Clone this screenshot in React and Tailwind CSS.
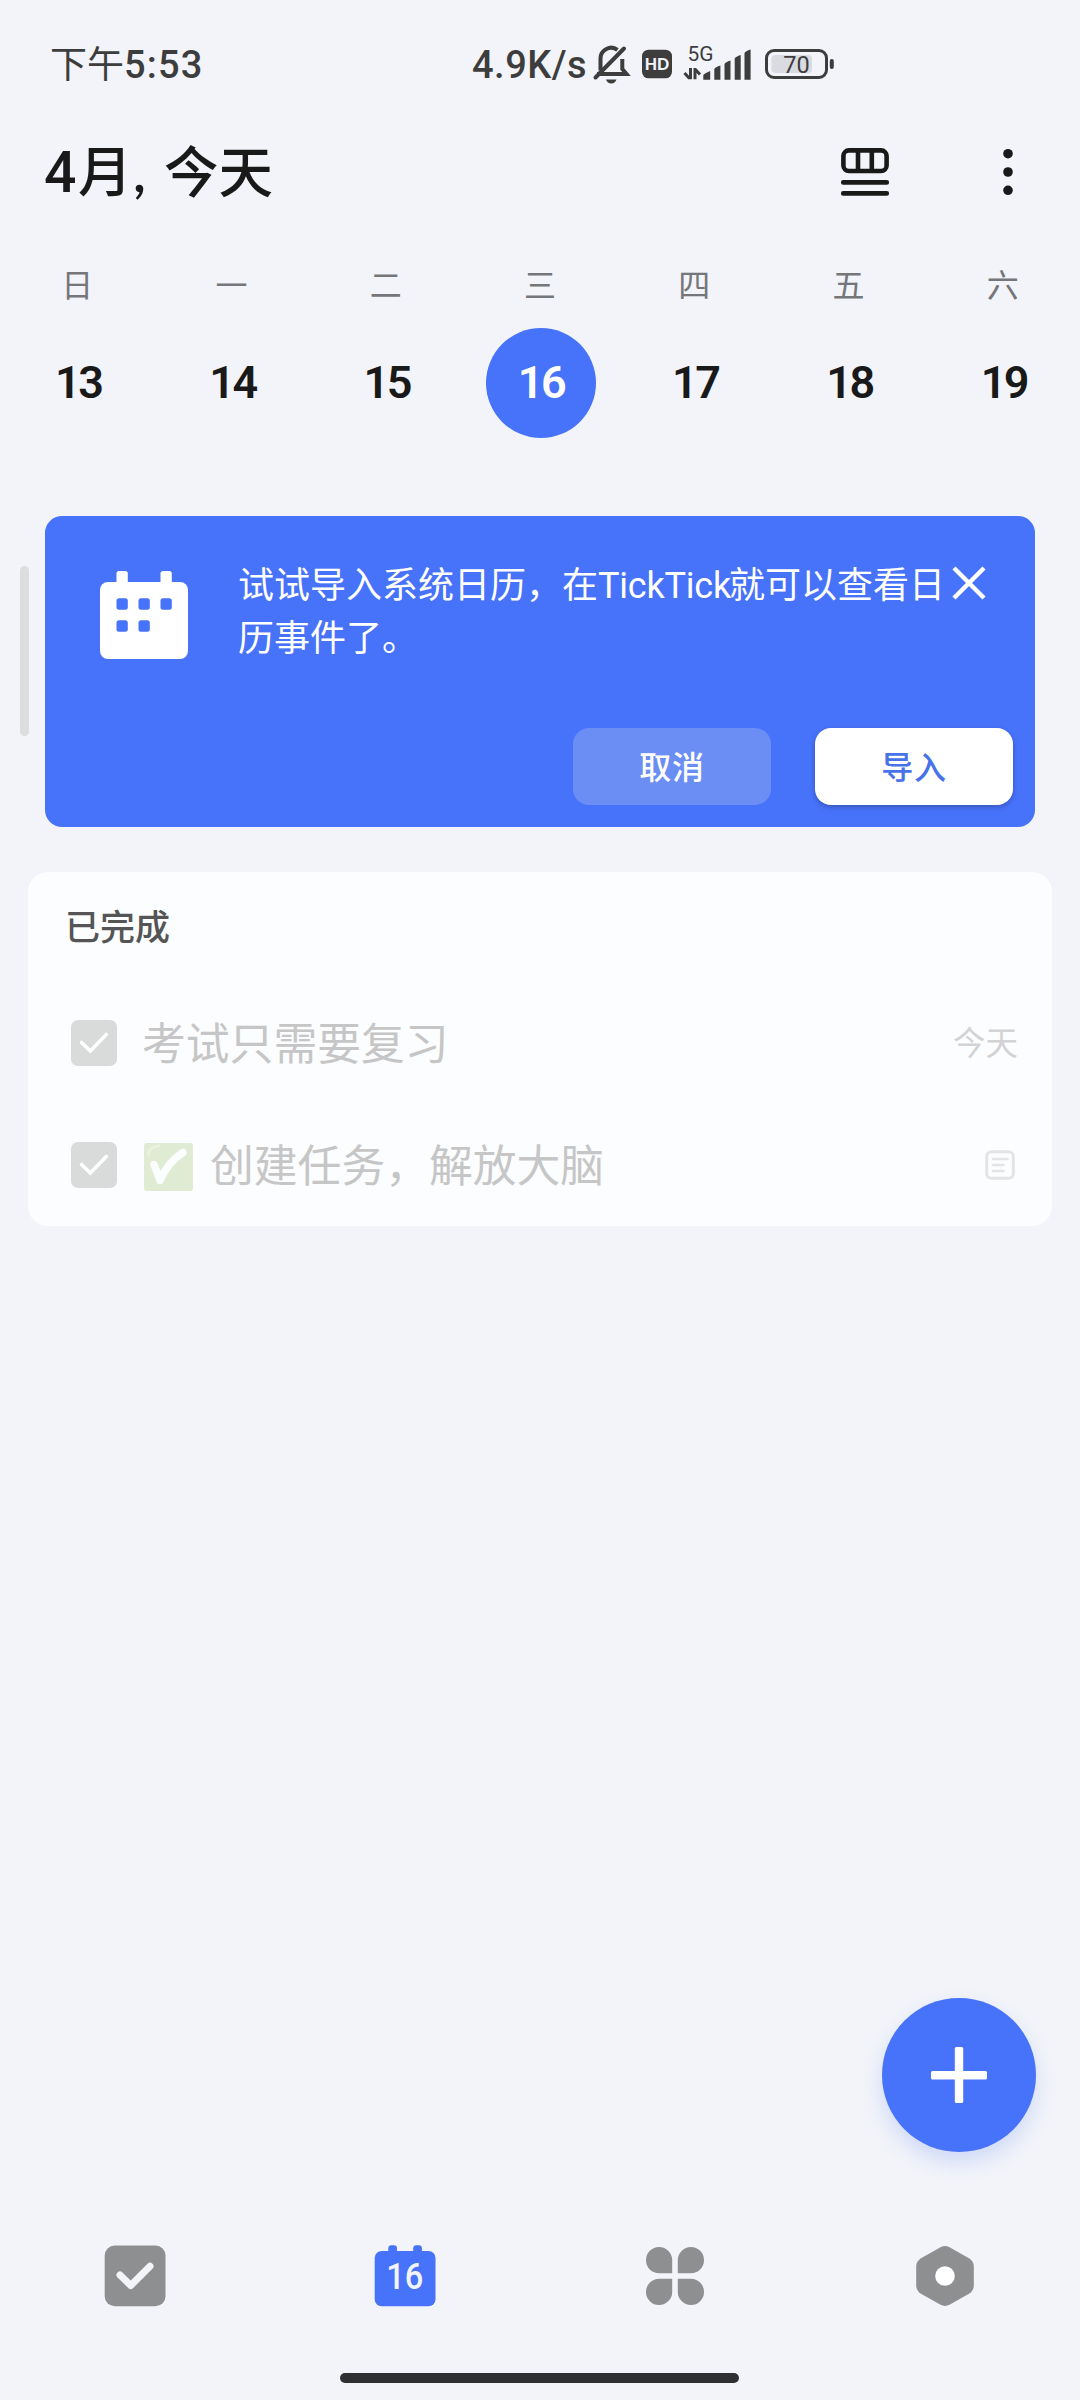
const WEEK = [
  ['日', 13], ['一', 14], ['二', 15], ['三', 16], ['四', 17], ['五', 18], ['六', 19],
];

function StatusBar() {
  return (
    <div className="flex h-[128px] items-center pl-[50px] text-[38px] font-medium leading-none text-[#3d3d3d]">
      <div className="w-[422px] whitespace-nowrap">
        <span className="text-[37px] font-normal">下午</span>
        <span className="font-[Roboto] tracking-[1.2px]">5:53</span>
      </div>
      <div className="w-[118px] whitespace-nowrap">
        <span className="font-[Roboto] tracking-[0.5px]">4.9K/s</span>
      </div>
      <svg className="h-[56px] w-[245px] shrink-0" viewBox="590 36 245 56" fill="none">
        <path d="M597 74h29.500l-4.200-5V59M600.500 70.500V58.500a10.700 10.700 0 0 1 17-8.700" stroke="#3d3d3d" strokeWidth="4" />
        <path d="M595.500 77.500L624 48.500" stroke="#3d3d3d" strokeWidth="4" strokeLinecap="round" />
        <path d="M606 79.500h10.500q-1.500 4-5.250 4t-5.250-4z" fill="#3d3d3d" />
        <rect x="642" y="49.700" width="30" height="28.600" rx="6.500" fill="#3d3d3d" />
        <text x="657" y="70.200" textAnchor="middle" fontSize="17.500" fontWeight="900" fill="#f2f4f9" textLength="24.500" lengthAdjust="spacingAndGlyphs">HD</text>
        <text x="687.500" y="60.500" fontSize="20.500" fontFamily="Roboto" fontWeight="400" fill="#3d3d3d" textLength="26" lengthAdjust="spacingAndGlyphs">5G</text>
        <path d="M690.500 68v11.300M684.500 73l5 5.500M695 79.300V68M695 69l5 5.500" stroke="#3d3d3d" strokeWidth="3" />
        <g fill="#3d3d3d">
          <path d="M703.300 79.700V75q1-1.500 6.900-4v8.700zM714.300 79.700V69q1-2 6.100-3.500v14.200zM724.500 79.700V64q1-2 6-3.500v19.200zM734.700 79.700V58.500q1-2 6-3.500v24.700zM744.500 79.700V53q1-2 6.100-3.500v30.200z" />
        </g>
        <rect x="766.500" y="50.500" width="60" height="27" rx="7.500" stroke="#3d3d3d" strokeWidth="3" />
        <rect x="771.400" y="55" width="40.600" height="18" rx="4" fill="#d9dbe0" />
        <rect x="829.800" y="59" width="4" height="10" rx="2" fill="#3d3d3d" />
        <text x="796.500" y="72.500" textAnchor="middle" fontSize="23.500" fontFamily="Roboto" fontWeight="400" fill="#3d3d3d">70</text>
      </svg>
    </div>
  );
}

function Header() {
  return (
    <header className="flex h-[88px] items-center pl-[44px] pr-[65px] text-[#191919]">
      <h1 className="whitespace-pre text-[56px] font-medium leading-none">
        <span className="inline-block w-[34px] font-[Roboto] text-[57px] font-medium leading-none">4</span>
        <span className="inline-block w-[55px] text-[54px] leading-none">月</span>
        <span className="inline-block w-[31px] font-semibold leading-none">,</span>
        <span className="text-[54.5px]">今天</span>
      </h1>
      <svg className="ml-auto h-[50px] w-[50px]" viewBox="840 147 50 50" fill="none" stroke="currentColor" strokeWidth="4.600">
        <rect x="843.400" y="150.400" width="43.200" height="20.600" rx="5.500" />
        <path d="M858 150v21M871.800 150v21" />
        <path d="M843.200 182.400h43.600M843.200 193.400h43.600" strokeLinecap="round" />
      </svg>
      <svg className="ml-[111px] h-[50px] w-[14px]" viewBox="0 0 14 50" fill="currentColor">
        <circle cx="7" cy="6.700" r="4.800" />
        <circle cx="7" cy="25" r="4.800" />
        <circle cx="7" cy="43.300" r="4.800" />
      </svg>
    </header>
  );
}

function WeekStrip() {
  return (
    <div className="grid h-[300px] grid-cols-7 pt-[45px]">
      {WEEK.map(([name, day]) => (
        <div key={day} className="flex flex-col items-center">
          <span className="h-[50px] text-[32px] leading-[48px] text-[#757679]">{name}</span>
          <span
            className={
              day === 16
                ? 'mt-[17px] ml-[2px] flex size-[110px] items-center justify-center rounded-full bg-[#4772fa] text-[45px] font-semibold text-white'
                : 'mt-[17px] ml-[2px] flex size-[110px] items-center justify-center text-[45px] font-semibold text-[#191919]'
            }
          >
            <span className="font-[Roboto] tracking-[-2.5px]">{day}</span>
          </span>
        </div>
      ))}
    </div>
  );
}

function ImportCard() {
  return (
    <section className="mx-[45px] flex h-[311px] flex-col rounded-[17px] bg-[#4772fa] text-white">
      <div className="flex h-[212px] pt-[43px]">
        <svg className="ml-[55px] mt-[12px] h-[88px] w-[88px] shrink-0" viewBox="0 0 88 88" fill="#fff">
          <rect y="11" width="88" height="77" rx="8" />
          <rect x="16.500" width="11.300" height="20" rx="2.500" />
          <rect x="60.500" width="11.300" height="20" rx="2.500" />
          <g fill="#4772fa">
            <rect x="16.500" y="27.300" width="11.300" height="11.400" rx="2.500" />
            <rect x="38.500" y="27.300" width="11.300" height="11.400" rx="2.500" />
            <rect x="60.500" y="27.300" width="11.300" height="11.400" rx="2.500" />
            <rect x="16.500" y="49.300" width="11.300" height="11.400" rx="2.500" />
            <rect x="38.500" y="49.300" width="11.300" height="11.400" rx="2.500" />
          </g>
        </svg>
        <p className="-mt-px ml-[50px] w-[714px] whitespace-nowrap text-[36px] leading-[53px]">
          试试导入系统日历，在<span className="inline-block w-[131px] font-[Roboto] leading-none tracking-[-0.2px]">TickTick</span>就可以查看日<br />历事件了。
        </p>
        <svg className="mt-[7px] h-[34px] w-[34px] shrink-0" viewBox="0 0 34 34" stroke="#fff" strokeWidth="4.400">
          <path d="M2 2l30 30M32 2L2 32" />
        </svg>
      </div>
      <div className="flex justify-end gap-[44px] pr-[22px] text-[32px] font-medium tracking-[0.700px]">
        <button className="h-[77px] w-[198px] rounded-[16px] bg-[#6b8ef5] text-white">取消</button>
        <button className="h-[77px] w-[198px] rounded-[16px] bg-white text-[#4772ea] shadow-[0_2px_5px_rgba(0,0,0,0.25)]">导入</button>
      </div>
    </section>
  );
}

function Checkbox() {
  return (
    <svg className="mr-[25px] h-[46px] w-[46px] shrink-0" viewBox="0 0 46 46" fill="none">
      <rect width="46" height="46" rx="7" fill="#d9dbda" />
      <path d="M10.500 22.500L19.300 31 35.300 14.500" stroke="#fff" strokeWidth="3.600" strokeLinecap="round" />
    </svg>
  );
}

function CompletedCard() {
  return (
    <section className="mx-[28px] mt-[45px] h-[354px] rounded-[20px] bg-[#fcfdff]">
      <h2 className="h-[110px] pl-[37px] text-[35px] font-medium leading-[108px] text-[#555]">已完成</h2>
      <div className="flex h-[122px] items-center pl-[43px] pr-[34px]">
        <Checkbox />
        <span className="whitespace-nowrap pt-[2px] text-[43.8px] leading-none text-[#c6c6c6]">考试只需要复习</span>
        <span className="ml-auto text-[32.5px] leading-none text-[#d3d3d3]">今天</span>
      </div>
      <div className="flex h-[122px] items-center pl-[43px] pr-[37px]">
        <Checkbox />
        <svg className="ml-[2px] mt-[4px] h-[48px] w-[49px] shrink-0" viewBox="0 0 49 48" fill="none">
          <rect width="49" height="48" rx="3" fill="#dfebd2" />
          <path d="M4 12Q5 4 15 3" stroke="#e9f2e0" strokeWidth="3" strokeLinecap="round" />
          <path d="M10 21.500L16 37.500Q24 19 39 9.500" stroke="#fcfdff" strokeWidth="7.500" strokeLinecap="round" strokeLinejoin="round" />
        </svg>
        <span className="ml-[17px] whitespace-nowrap pt-[2px] text-[43.8px] leading-none text-[#c6c6c6]">创建任务，解放大脑</span>
        <svg className="ml-auto h-[30px] w-[30px] shrink-0" viewBox="0 0 30 30" fill="none" stroke="#e3e4e4" strokeLinecap="round">
          <rect x="1.700" y="1.700" width="26.600" height="26.600" rx="4.500" strokeWidth="3" />
          <path d="M8 9h14.500M8 15h10.500M8 21h10.500" strokeWidth="2.600" />
        </svg>
      </div>
    </section>
  );
}

function NavBar() {
  return (
    <nav className="grid h-[62px] grid-cols-4 justify-items-center">
      <svg className="size-[62px]" viewBox="104 2245 62 62" fill="none">
        <rect x="104.700" y="2245.500" width="60.800" height="60.800" rx="10" fill="#8e8f91" />
        <path d="M120 2275L130.700 2285.500 150 2266.200" stroke="#f2f4f9" strokeWidth="7" strokeLinecap="round" strokeLinejoin="round" />
      </svg>
      <svg className="size-[62px]" viewBox="374 2245 62 62" fill="#4772fa">
        <rect x="374.700" y="2251" width="60.800" height="55.300" rx="7" />
        <rect x="388.300" y="2245.300" width="8.700" height="12" rx="3" />
        <rect x="413.200" y="2245.300" width="8.700" height="12" rx="3" />
        <text x="404.800" y="2289" textAnchor="middle" fontSize="36.500" fontFamily="Roboto" fontWeight="500" fill="#f2f4f9" textLength="37" lengthAdjust="spacingAndGlyphs">16</text>
      </svg>
      <svg className="size-[62px]" viewBox="644 2245 62 62" fill="#8e8f91">
        <path d="M672.200 2273.200h-13a13.100 13.100 0 1 1 13-13zM677.800 2273.200h13a13.100 13.100 0 1 0-13-13zM672.200 2278.800h-13a13.100 13.100 0 1 0 13 13zM677.800 2278.800h13a13.100 13.100 0 1 1-13 13z" />
      </svg>
      <svg className="size-[62px]" viewBox="914 2245 62 62">
        <path d="M940.500 2247.200q4.500-2.200 9 0l19.500 11.100q4.800 3 4.800 8.200v19q0 5.200-4.800 8.200l-19.500 11.100q-4.500 2.200-9 0l-19.500-11.100q-4.800-3-4.800-8.200v-19q0-5.200 4.800-8.200z" fill="#8e8f91" />
        <circle cx="945" cy="2276" r="9.800" fill="#fff" />
      </svg>
    </nav>
  );
}

export default function App() {
  return (
    <main
      lang="zh-CN"
      className="relative flex h-[2400px] w-[1080px] flex-col overflow-hidden bg-[#f2f4f9] font-[Lato,'Noto_Sans_CJK_SC',sans-serif]"
    >
      <StatusBar />
      <Header />
      <WeekStrip />
      <ImportCard />
      <CompletedCard />
      <div className="mt-auto mr-[44px] flex justify-end">
        <button className="flex size-[154px] items-center justify-center rounded-full bg-[#4772fa] shadow-[0_10px_20px_rgba(71,114,250,0.2)]">
          <svg className="size-[56px]" viewBox="0 0 56 56" fill="#fff">
            <rect x="0" y="24" width="56" height="8.400" rx="1.500" />
            <rect x="23.800" y="0" width="8.400" height="56" rx="1.500" />
          </svg>
        </button>
      </div>
      <div className="h-[93px] shrink-0" />
      <NavBar />
      <div className="ml-[340px] mt-[66px] mb-[17px] h-[10px] w-[399px] shrink-0 rounded-full bg-[#2f3032]" />
      <div className="absolute left-[20px] top-[566px] h-[170px] w-[9px] rounded-full bg-[#dcddde]" />
    </main>
  );
}
